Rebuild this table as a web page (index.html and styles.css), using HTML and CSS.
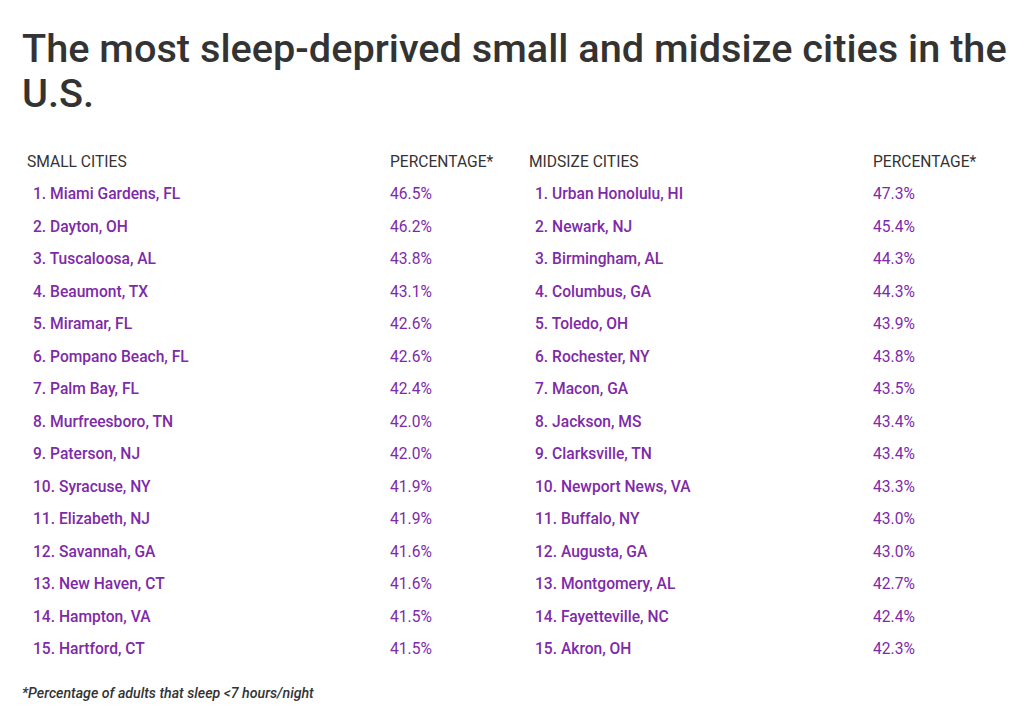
FILE: index.html
```html
<!DOCTYPE html>
<html lang="en">
<head>
<meta charset="utf-8">
<title>The most sleep-deprived small and midsize cities in the U.S.</title>
<link rel="stylesheet" href="styles.css">
</head>
<body>
<main class="page">
  <h1 class="title">The most sleep-deprived small and midsize cities in the U.S.</h1>
  <div class="tables">
    <div class="table table-small">
      <div class="head">SMALL CITIES</div><div class="head">PERCENTAGE*</div>
      <div class="city">1. Miami Gardens, FL</div><div class="pct">46.5%</div>
      <div class="city">2. Dayton, OH</div><div class="pct">46.2%</div>
      <div class="city">3. Tuscaloosa, AL</div><div class="pct">43.8%</div>
      <div class="city">4. Beaumont, TX</div><div class="pct">43.1%</div>
      <div class="city">5. Miramar, FL</div><div class="pct">42.6%</div>
      <div class="city">6. Pompano Beach, FL</div><div class="pct">42.6%</div>
      <div class="city">7. Palm Bay, FL</div><div class="pct">42.4%</div>
      <div class="city">8. Murfreesboro, TN</div><div class="pct">42.0%</div>
      <div class="city">9. Paterson, NJ</div><div class="pct">42.0%</div>
      <div class="city">10. Syracuse, NY</div><div class="pct">41.9%</div>
      <div class="city">11. Elizabeth, NJ</div><div class="pct">41.9%</div>
      <div class="city">12. Savannah, GA</div><div class="pct">41.6%</div>
      <div class="city">13. New Haven, CT</div><div class="pct">41.6%</div>
      <div class="city">14. Hampton, VA</div><div class="pct">41.5%</div>
      <div class="city">15. Hartford, CT</div><div class="pct">41.5%</div>
    </div>
    <div class="table table-mid">
      <div class="head">MIDSIZE CITIES</div><div class="head">PERCENTAGE*</div>
      <div class="city">1. Urban Honolulu, HI</div><div class="pct">47.3%</div>
      <div class="city">2. Newark, NJ</div><div class="pct">45.4%</div>
      <div class="city">3. Birmingham, AL</div><div class="pct">44.3%</div>
      <div class="city">4. Columbus, GA</div><div class="pct">44.3%</div>
      <div class="city">5. Toledo, OH</div><div class="pct">43.9%</div>
      <div class="city">6. Rochester, NY</div><div class="pct">43.8%</div>
      <div class="city">7. Macon, GA</div><div class="pct">43.5%</div>
      <div class="city">8. Jackson, MS</div><div class="pct">43.4%</div>
      <div class="city">9. Clarksville, TN</div><div class="pct">43.4%</div>
      <div class="city">10. Newport News, VA</div><div class="pct">43.3%</div>
      <div class="city">11. Buffalo, NY</div><div class="pct">43.0%</div>
      <div class="city">12. Augusta, GA</div><div class="pct">43.0%</div>
      <div class="city">13. Montgomery, AL</div><div class="pct">42.7%</div>
      <div class="city">14. Fayetteville, NC</div><div class="pct">42.4%</div>
      <div class="city">15. Akron, OH</div><div class="pct">42.3%</div>
    </div>
  </div>
  <p class="note">*Percentage of adults that sleep &lt;7 hours/night</p>
</main>
</body>
</html>
```
FILE: styles.css
```css
html, body {
  margin: 0;
  padding: 0;
  background: #ffffff;
}
body {
  font-family: Roboto, "Liberation Sans", Arial, sans-serif;
  color: #333333;
}
.page {
  padding: 26px 0 0 22px;
}
.title {
  margin: 0;
  width: 995px;
  font-size: 39.7px;
  line-height: 45px;
  font-weight: 500;
  color: #333333;
}
.tables {
  display: flex;
  margin-top: 29.5px;
  padding-left: 5px;
}
.table {
  display: grid;
  grid-auto-rows: 32.5px;
  align-items: center;
  font-size: 15.6px;
}
.table-small {
  width: 502px;
  grid-template-columns: 363px 1fr;
}
.table-mid {
  grid-template-columns: 344px 1fr;
}
.head {
  color: #333333;
  font-weight: 400;
}
.city {
  padding-left: 6px;
  color: #7e2aa8;
  font-weight: 500;
}
.pct {
  color: #7e2aa8;
}
.note {
  margin: 19px 0 0;
  font-size: 14.2px;
  font-style: italic;
  font-weight: 500;
  color: #333333;
}
```
